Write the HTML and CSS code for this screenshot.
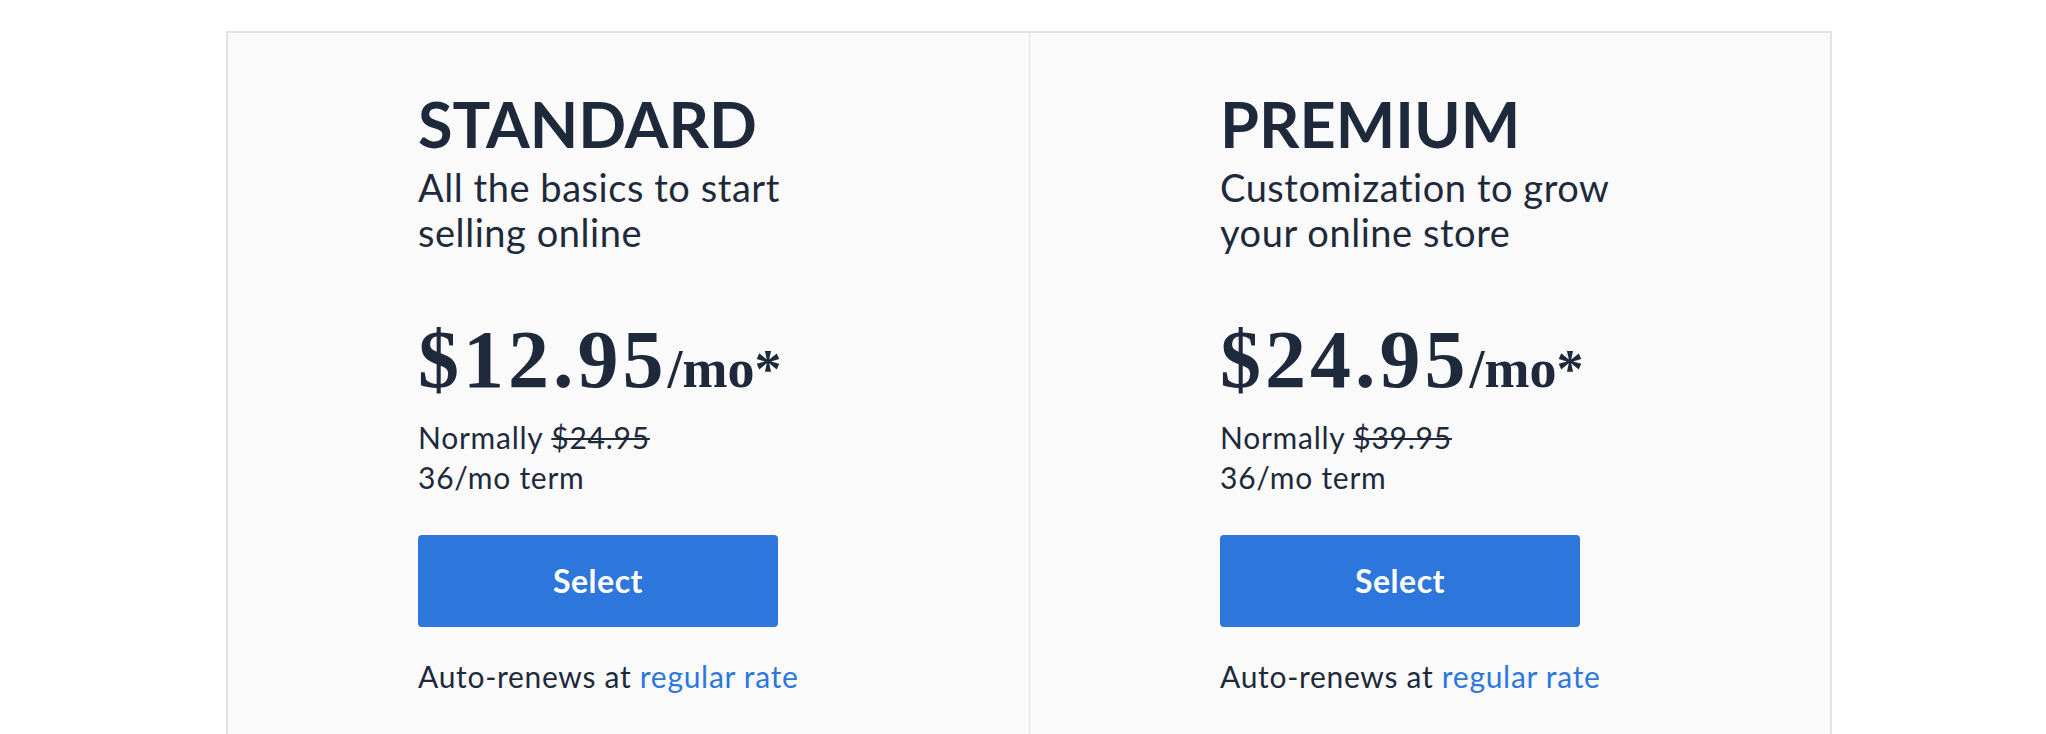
FILE: index.html
```html
<!DOCTYPE html>
<html lang="en">
<head>
<meta charset="utf-8">
<title>Plans</title>
<link rel="stylesheet" href="styles.css">
</head>
<body>
<div class="plans">
  <div class="plan">
    <div class="plan-inner">
      <h2 class="plan-name">STANDARD</h2>
      <p class="plan-desc">All the basics to start<br>selling online</p>
      <div class="price"><span class="amount">$12.95</span><span class="per">/mo*</span></div>
      <p class="normal">Normally <s>$24.95</s><br>36/mo term</p>
      <button class="select">Select</button>
      <p class="renew">Auto-renews at <a href="#">regular rate</a></p>
    </div>
  </div>
  <div class="plan">
    <div class="plan-inner">
      <h2 class="plan-name">PREMIUM</h2>
      <p class="plan-desc">Customization to grow<br>your online store</p>
      <div class="price"><span class="amount">$24.95</span><span class="per">/mo*</span></div>
      <p class="normal">Normally <s>$39.95</s><br>36/mo term</p>
      <button class="select">Select</button>
      <p class="renew">Auto-renews at <a href="#">regular rate</a></p>
    </div>
  </div>
</div>
</body>
</html>
```
FILE: styles.css
```css
html, body {
  margin: 0;
  padding: 0;
  background: #ffffff;
}
body {
  font-family: "Lato", "Liberation Sans", sans-serif;
  color: #1e2a3b;
  height: 734px;
  overflow: hidden;
}
.plans {
  margin: 31px 0 0 226px;
  width: 1602px;
  height: 701px;
  display: grid;
  grid-template-columns: 801px 1fr;
  background: #fafafa;
  border: 2px solid #e3e3e3;
  border-bottom: none;
}
.plan + .plan {
  border-left: 1px solid #e3e3e3;
}
.plan-inner {
  padding: 59px 0 0 190px;
  display: flex;
  flex-direction: column;
  align-items: flex-start;
}
.plan-name {
  margin: 0;
  font-size: 63px;
  line-height: 63px;
  font-weight: 700;
}
.plan-desc {
  margin: 10px 0 0;
  font-size: 38px;
  line-height: 45px;
  font-weight: 400;
  letter-spacing: 0.55px;
}
.price {
  margin-top: 64px;
  font-family: "Liberation Serif", "Times New Roman", serif;
  font-weight: 700;
  font-size: 82px;
  line-height: 82px;
  white-space: nowrap;
}
.amount {
  letter-spacing: 4px;
}
.per {
  font-size: 54px;
  line-height: 1;
}
.normal {
  margin: 16px 0 0;
  font-size: 30px;
  line-height: 40px;
  letter-spacing: 0.75px;
}
.normal s {
  text-decoration-thickness: 2px;
}
.select {
  margin-top: 38px;
  width: 360px;
  height: 92px;
  border: none;
  border-radius: 4px;
  background: #2d77dc;
  color: #ffffff;
  font-family: "Lato", "Liberation Sans", sans-serif;
  font-size: 32px;
  font-weight: 700;
  letter-spacing: 0.5px;
  cursor: pointer;
  padding: 0 0 2px;
}
.renew {
  margin: 29px 0 0;
  font-size: 30px;
  line-height: 40px;
  letter-spacing: 0.7px;
}
.renew a {
  color: #2d78df;
  text-decoration: none;
}
```
